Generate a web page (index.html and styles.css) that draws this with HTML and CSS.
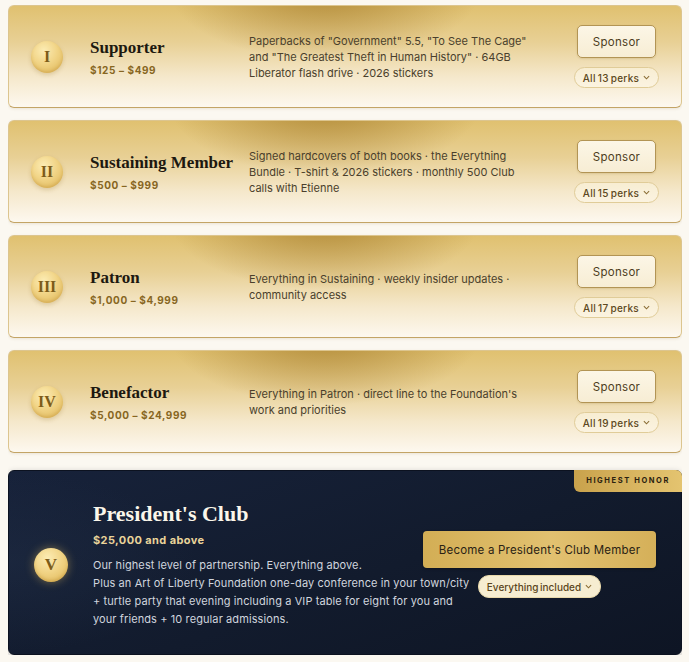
FILE: index.html
```html
<!DOCTYPE html>
<html lang="en">
<head>
<meta charset="utf-8">
<title>Sponsorship tiers</title>
<link rel="stylesheet" href="styles.css">
</head>
<body>
<main class="tiers">
  <section class="tier">
    <div class="medal">I</div>
    <div class="name">
      <h2>Supporter</h2>
      <p class="price">$125 – $499</p>
    </div>
    <p class="desc">Paperbacks of "Government" 5.5, "To See The Cage" and "The Greatest Theft in Human History" · 64GB Liberator flash drive · 2026 stickers</p>
    <div class="actions">
      <button class="sponsor">Sponsor</button>
      <button class="perks">All 13 perks <svg viewBox="0 0 8 5" class="chev"><path d="M1 1l3 3 3-3" /></svg></button>
    </div>
  </section>

  <section class="tier">
    <div class="medal">II</div>
    <div class="name">
      <h2>Sustaining Member</h2>
      <p class="price">$500 – $999</p>
    </div>
    <p class="desc">Signed hardcovers of both books · the Everything Bundle · T-shirt &amp; 2026 stickers · monthly 500 Club calls with Etienne</p>
    <div class="actions">
      <button class="sponsor">Sponsor</button>
      <button class="perks">All 15 perks <svg viewBox="0 0 8 5" class="chev"><path d="M1 1l3 3 3-3" /></svg></button>
    </div>
  </section>

  <section class="tier">
    <div class="medal">III</div>
    <div class="name">
      <h2>Patron</h2>
      <p class="price">$1,000 – $4,999</p>
    </div>
    <p class="desc">Everything in Sustaining · weekly insider updates · community access</p>
    <div class="actions">
      <button class="sponsor">Sponsor</button>
      <button class="perks">All 17 perks <svg viewBox="0 0 8 5" class="chev"><path d="M1 1l3 3 3-3" /></svg></button>
    </div>
  </section>

  <section class="tier">
    <div class="medal">IV</div>
    <div class="name">
      <h2>Benefactor</h2>
      <p class="price">$5,000 – $24,999</p>
    </div>
    <p class="desc">Everything in Patron · direct line to the Foundation's work and priorities</p>
    <div class="actions">
      <button class="sponsor">Sponsor</button>
      <button class="perks">All 19 perks <svg viewBox="0 0 8 5" class="chev"><path d="M1 1l3 3 3-3" /></svg></button>
    </div>
  </section>

  <section class="tier top">
    <span class="badge">HIGHEST HONOR</span>
    <div class="medal">V</div>
    <div class="top-body">
      <h2>President's Club</h2>
      <p class="price">$25,000 and above</p>
      <p class="top-desc">Our highest level of partnership. Everything above.</p>
      <p class="top-desc">Plus an Art of Liberty Foundation one-day conference in your town/city + turtle party that evening including a VIP table for eight for you and your friends + 10 regular admissions.</p>
    </div>
    <div class="actions top-actions">
      <button class="become">Become a President's Club Member</button>
      <button class="perks light">Everything included <svg viewBox="0 0 8 5" class="chev"><path d="M1 1l3 3 3-3" /></svg></button>
    </div>
  </section>
</main>
</body>
</html>
```

FILE: styles.css
```css
* { box-sizing: border-box; }

html, body {
  background: #fbf8f1;
}

body {
  margin: 5px 7px 0 8px;
  font-family: "Inter", "Noto Sans", sans-serif;
  color: #3e3424;
}

h2, p { margin: 0; }

button {
  font-family: inherit;
  cursor: pointer;
}

.tiers {
  display: flex;
  flex-direction: column;
  gap: 12px;
}

.tier {
  position: relative;
  display: grid;
  grid-template-columns: 32px 132px 1fr 85px;
  column-gap: 27px;
  align-items: center;
  padding: 19px 22px;
  border: 1px solid #dcc58f;
  border-bottom-color: #c3a466;
  border-radius: 6px;
  background:
    radial-gradient(ellipse 32% 95% at 47% -15%, rgba(160, 118, 36, 0.7), rgba(160, 118, 36, 0) 72%),
    linear-gradient(180deg, #e0c170 0%, #e8d095 36%, #f5e8cb 70%, #fdf8ef 100%);
  box-shadow: 0 1px 3px rgba(120, 90, 30, 0.12);
}

.medal {
  width: 32px;
  height: 32px;
  border-radius: 50%;
  display: flex;
  align-items: center;
  justify-content: center;
  font-family: "Liberation Serif", "DejaVu Serif", serif;
  font-weight: bold;
  font-size: 16px;
  color: #7d5c19;
  background: radial-gradient(circle at 40% 30%, #fcecb4 0%, #f1d486 45%, #ddb453 100%);
  box-shadow: 0 2px 4px rgba(140, 100, 20, 0.22), inset 0 -2px 3px rgba(170, 120, 30, 0.25);
}

.name h2 {
  font-family: "Liberation Serif", "DejaVu Serif", serif;
  font-weight: bold;
  font-size: 17px;
  line-height: 20px;
  color: #1d1810;
  white-space: nowrap;
}

.price {
  margin-top: 6px;
  font-size: 10px;
  font-weight: 700;
  letter-spacing: 0.6px;
  color: #876622;
}

.desc {
  max-width: 290px;
  font-size: 11px;
  line-height: 16px;
  letter-spacing: 0;
  color: #4a3f2c;
}

.actions {
  display: flex;
  flex-direction: column;
  align-items: center;
  gap: 9px;
}

.sponsor {
  width: 79px;
  height: 33px;
  border: 1px solid #b29454;
  border-radius: 5px;
  background: linear-gradient(180deg, #fcf6e6, #f7edd4);
  font-size: 11.5px;
  color: #4d3d1d;
  letter-spacing: 0.3px;
  box-shadow: 0 1px 2px rgba(120, 90, 30, 0.15);
}

.perks {
  display: inline-flex;
  align-items: center;
  gap: 4px;
  height: 21px;
  padding: 0 8px;
  border: 1px solid #e0cc98;
  border-radius: 11px;
  background: rgba(255, 250, 236, 0.45);
  font-size: 10px;
  font-weight: 500;
  letter-spacing: 0.3px;
  color: #5c4820;
  word-spacing: -1px;
  white-space: nowrap;
}

.chev {
  width: 7px;
  height: 5px;
  fill: none;
  stroke: #8a6d35;
  stroke-width: 1.2;
}

/* President's Club */
.tier.top {
  margin-top: 5px;
  grid-template-columns: 34px 1fr 233px;
  column-gap: 25px;
  padding: 30px 25px 26px 25px;
  border: 1px solid #0c1220;
  background:
    radial-gradient(ellipse 40% 70% at 0% 50%, rgba(40, 55, 80, 0.3), rgba(40, 55, 80, 0) 70%),
    linear-gradient(160deg, #17223a 0%, #121b2d 55%, #0e1524 100%);
  box-shadow: 0 2px 6px rgba(20, 25, 40, 0.25);
  color: #d4d8e0;
}

.tier.top .medal {
  width: 34px;
  height: 34px;
  font-size: 17px;
  box-shadow: 0 0 10px rgba(230, 190, 90, 0.45), inset 0 -2px 3px rgba(170, 120, 30, 0.3);
}

.badge {
  position: absolute;
  top: -1px;
  right: -1px;
  padding: 0 12px;
  height: 22px;
  line-height: 22px;
  border-radius: 0 6px 0 6px;
  background: linear-gradient(90deg, #c9a24c 0%, #e4c470 100%);
  font-size: 7.5px;
  font-weight: 700;
  letter-spacing: 1.6px;
  color: #2b2210;
}

.top-body {
  min-width: 0;
}

.top-body h2 {
  font-family: "Liberation Serif", "DejaVu Serif", serif;
  font-weight: bold;
  font-size: 22px;
  line-height: 26px;
  color: #fbf6ea;
}

.top-body .price {
  margin-top: 6px;
  margin-bottom: 9px;
  font-size: 11px;
  letter-spacing: 0.4px;
  color: #ead49a;
}

.top-desc {
  width: 385px;
  font-size: 11px;
  line-height: 18px;
  letter-spacing: 0.1px;
  color: #d0d5de;
}

.top-actions {
  gap: 7px;
}

.become {
  width: 233px;
  height: 37px;
  border: none;
  border-radius: 4px;
  background: linear-gradient(90deg, #d3ae55 0%, #e2c170 55%, #d5b059 100%);
  font-size: 11.5px;
  color: #2a2214;
  letter-spacing: 0.2px;
  box-shadow: 0 1px 3px rgba(0, 0, 0, 0.3);
}

.perks.light {
  height: 23px;
  padding: 0 8px;
  border: 1px solid #e8d8aa;
  background: #f6edd1;
  color: #5a4520;
  font-size: 10px;
  letter-spacing: 0;
}
```
